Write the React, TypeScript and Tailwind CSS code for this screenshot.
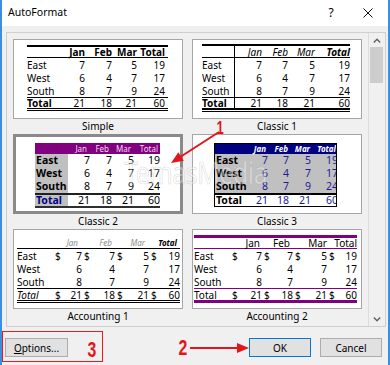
import React from "react";

const HEAD = ["", "Jan", "Feb", "Mar", "Total"];
const DATA = [
  ["East", "7", "7", "5", "19"],
  ["West", "6", "4", "7", "17"],
  ["South", "8", "7", "9", "24"],
];
const TOTAL = ["Total", "21", "18", "21", "60"];

type RowProps = {
  cells: string[];
  widths: string[];
  className?: string;
  cellCls?: string[];
  dollar?: boolean;
};

function Row({ cells, widths, className = "", cellCls = [], dollar = false }: RowProps) {
  return (
    <div className={`flex items-stretch leading-none ${className}`}>
      {cells.map((c, i) => (
        <div
          key={i}
          className={`${widths[i]} shrink-0 flex items-center whitespace-nowrap ${
            i === 0 ? "justify-start" : dollar ? "justify-between pl-[2px]" : "justify-end"
          } ${cellCls[i] ?? ""}`}
        >
          {dollar && i > 0 ? (
            <>
              <span>$</span>
              <span>{c}</span>
            </>
          ) : (
            c
          )}
        </div>
      ))}
    </div>
  );
}

const wS = ["w-[30px]", "w-[28px]", "w-[27px]", "w-[25px]", "w-[28px]"];
function Simple() {
  return (
    <div className="ml-[13px] mt-[5px] w-[141px]">
      <div className="h-[2px] bg-black" />
      <Row cells={HEAD} widths={wS} className="h-[10px] font-bold" />
      <div className="h-px bg-black" />
      {DATA.map((r) => (
        <Row key={r[0]} cells={r} widths={wS} className="h-[13px]" />
      ))}
      <div className="h-px bg-black" />
      <Row cells={TOTAL} widths={wS} className="h-[10px]" cellCls={["font-bold"]} />
      <div className="h-[3px] border-y border-black" />
    </div>
  );
}

const wC1 = ["w-[33px]", "w-[27px]", "w-[26px]", "w-[27px]", "w-[35px]"];
function Classic1() {
  const lab = "border-r border-black";
  return (
    <div className="ml-[9px] mt-[4px] w-[148px]">
      <div className="h-[2px] bg-black" />
      <Row cells={HEAD} widths={wC1} className="h-[11px] italic" cellCls={[lab, "", "", "", "font-bold"]} />
      <div className="h-px bg-black" />
      {DATA.map((r) => (
        <Row key={r[0]} cells={r} widths={wC1} className="h-[13px]" cellCls={[lab]} />
      ))}
      <div className="h-px bg-black" />
      <Row cells={TOTAL} widths={wC1} className="h-[10px]" cellCls={[lab + " font-bold"]} />
      <div className="h-[4px] border-t-2 border-b border-black" />
    </div>
  );
}

const wC2 = ["w-[33px]", "w-[22px]", "w-[22px]", "w-[22px]", "w-[26px]"];
function Classic2() {
  const lab = "bg-[#c0c0c0] font-bold text-[10.5px] pl-px";
  return (
    <div className="ml-[19px] mt-[6px] w-[125px]">
      <Row
        cells={HEAD}
        widths={wC2}
        className="h-[11px] bg-[#800080] text-[8px] text-[#f2dcf2]"
        cellCls={["", "pr-[3px]", "pr-[3px]", "pr-[3px]", "pr-[2px]"]}
      />
      {DATA.map((r) => (
        <Row key={r[0]} cells={r} widths={wC2} className="h-[13px] text-[10.5px]" cellCls={[lab]} />
      ))}
      <div className="h-[2px] bg-[#202020]" />
      <Row cells={TOTAL} widths={wC2} className="h-[11px] text-[10.5px]" cellCls={[lab + " text-[#000080]"]} />
      <div className="h-[2px] bg-[#303030]" />
    </div>
  );
}

const wC3 = ["w-[31px]", "w-[22px]", "w-[21px]", "w-[22px]", "w-[27px]"];
function Classic3() {
  const v = "text-[#1c1c94]";
  return (
    <div className="ml-[21px] mt-[8px] w-[123px] border border-black overflow-hidden">
      <Row
        cells={HEAD}
        widths={wC3}
        className="h-[10px] bg-[#000080] text-[8px] text-white font-bold italic"
        cellCls={["", "pr-[2px]", "pr-[1px]", "pr-[1px]", "pr-[2px]"]}
      />
      {DATA.map((r) => (
        <Row
          key={r[0]}
          cells={r}
          widths={wC3}
          className="h-[13px] bg-[#c0c0c0] text-[10.5px]"
          cellCls={["font-bold pl-px", v, v, v, v]}
        />
      ))}
      <div className="h-[2px] bg-black" />
      <Row
        cells={TOTAL}
        widths={wC3}
        className="h-[11px] bg-white text-[10.5px]"
        cellCls={["font-bold pl-px", v, v, v, v]}
      />
    </div>
  );
}

const wA1 = ["w-[36px]", "w-[29px]", "w-[33px]", "w-[34px]", "w-[31px]"];
function Accounting1() {
  return (
    <div className="ml-[3px] mt-[7px] w-[163px]">
      <Row
        cells={HEAD}
        widths={wA1}
        className="h-[11px] text-[8px] italic text-[#8c8c8c]"
        cellCls={["", "pr-[4px]", "pr-[3px]", "pr-[4px]", "pr-[3px] font-bold text-black"]}
      />
      <div className="h-px bg-black" />
      {DATA.map((r, i) => (
        <Row key={r[0]} cells={r} widths={wA1} className="h-[13px]" dollar={i === 0} />
      ))}
      <div className="h-px bg-black" />
      <Row cells={TOTAL} widths={wA1} className="h-[11px]" cellCls={["italic"]} dollar />
      <div className="h-[3px] border-y border-black" />
    </div>
  );
}

const wA2 = ["w-[36px]", "w-[32px]", "w-[31px]", "w-[34px]", "w-[30px]"];
function Accounting2() {
  return (
    <div className="ml-px mt-[5px] w-[163px]">
      <div className="h-[3px] bg-[#800080]" />
      <Row cells={HEAD} widths={wA2} className="h-[10px]" cellCls={["", "pr-[2px]", "pr-[3px]", "", ""]} />
      <div className="h-px bg-[#800080]" />
      {DATA.map((r, i) => (
        <Row key={r[0]} cells={r} widths={wA2} className="h-[13px]" dollar={i === 0} />
      ))}
      <div className="h-px bg-[#800080]" />
      <Row cells={TOTAL} widths={wA2} className="h-[11px]" dollar />
      <div className="h-[3px] bg-[#800080]" />
    </div>
  );
}

function Preview({ label, sel, children }: { label: string; sel?: boolean; children: React.ReactNode }) {
  return (
    <div>
      <div
        className={`h-[80px] bg-white overflow-hidden text-[10px] text-black ${
          sel ? "border-[3px] border-[#8a8a8a]" : "border border-[#a6a6a6]"
        }`}
      >
        {children}
      </div>
      <div className="h-[15px] flex items-center justify-center text-[10px] text-black">{label}</div>
    </div>
  );
}

function Chevron({ down }: { down?: boolean }) {
  return (
    <svg width="8" height="5" viewBox="0 0 8 5" className={down ? "rotate-180" : ""}>
      <path d="M0.8 4.4 L4 1.2 L7.2 4.4" fill="none" stroke="#606060" strokeWidth="1.4" />
    </svg>
  );
}

export default function App() {
  return (
    <div className="relative w-[390px] h-[365px] overflow-hidden font-['Noto_Sans',sans-serif]">
      <div className="w-[390px] h-[365px] bg-[#f0f0f0] border-x-2 border-[#3b8fe0] flex flex-col">
        {/* title bar */}
        <div className="h-[26px] bg-white flex items-center pl-[6px] shrink-0">
          <span className="text-[10.5px] text-black">AutoFormat</span>
          <span className="ml-auto text-[12px] text-black w-[10px] text-center">?</span>
          <svg width="10" height="10" viewBox="0 0 10 10" className="ml-[27px] mr-[15px]">
            <path d="M0.5 0.5 L9.5 9.5 M9.5 0.5 L0.5 9.5" stroke="#111" strokeWidth="1" />
          </svg>
        </div>

        {/* list box */}
        <div className="mt-[6px] ml-[4px] w-[380px] h-[295px] border border-[#cfcfcf] flex shrink-0">
          <div className="w-[361px] pl-[6px] pt-[6px] overflow-hidden">
            <div className="grid grid-cols-[170px_170px] gap-x-[9px]">
              <Preview label="Simple">
                <Simple />
              </Preview>
              <Preview label="Classic 1">
                <Classic1 />
              </Preview>
              <Preview label="Classic 2" sel>
                <Classic2 />
              </Preview>
              <Preview label="Classic 3">
                <Classic3 />
              </Preview>
              <Preview label="Accounting 1">
                <Accounting1 />
              </Preview>
              <Preview label="Accounting 2">
                <Accounting2 />
              </Preview>
            </div>
          </div>
          <div className="w-[17px] border-l border-[#dcdcdc] flex flex-col">
            <div className="h-[14px] flex items-center justify-center">
              <Chevron />
            </div>
            <div className="ml-px w-[13px] h-[36px] bg-[#cdcdcd]" />
            <div className="flex-1" />
            <div className="h-[14px] flex items-center justify-center">
              <Chevron down />
            </div>
          </div>
        </div>

        {/* buttons */}
        <div className="flex mt-[4px] text-[10px] text-black">
          <div className="w-[101px] h-[31px] border border-[#f01818] flex items-start pt-[6px] pl-[2px]">
            <button className="w-[63px] h-[19px] bg-[#e1e1e1] border border-[#adadad] leading-none">
              <span className="underline">O</span>ptions...
            </button>
            <span className="ml-[19px] w-[10px] flex justify-center text-[22px] font-bold text-[#e4141b] leading-none font-['Liberation_Sans',sans-serif] scale-x-[0.72] mt-[1px]">
              3
            </span>
          </div>
          <div className="ml-auto mr-[6px] mt-[7px] flex items-center h-[19px]">
            <span className="w-[10px] flex justify-center text-[22px] font-bold text-[#e4141b] leading-none font-['Liberation_Sans',sans-serif] scale-x-[0.72]">
              2
            </span>
            <svg width="60" height="12" viewBox="0 0 60 12" className="ml-px">
              <path d="M1 6 H50" stroke="#e4141b" strokeWidth="2" />
              <path d="M48 1 L60 6 L48 11 Z" fill="#e4141b" />
            </svg>
            <button className="w-[62px] h-[19px] bg-[#e1e1e1] border border-[#0078d7] leading-none">OK</button>
            <button className="ml-[9px] w-[62px] h-[19px] bg-[#e1e1e1] border border-[#adadad] leading-none">
              Cancel
            </button>
          </div>
        </div>
      </div>

      {/* watermark */}
      <div className="absolute left-[124px] top-[160px] text-[25px] leading-none tracking-[-0.5px] text-white/40 [-webkit-text-stroke:0.6px_rgba(150,150,150,0.35)] scale-y-[1.2] pointer-events-none">
        TemasMedia
      </div>

      {/* annotation 1 */}
      <svg width="390" height="365" viewBox="0 0 390 365" className="absolute left-0 top-0 pointer-events-none">
        <path d="M219 132 L181 156.5" stroke="#e4141b" strokeWidth="2" />
        <path d="M171 163 L183.8 160.7 L178.4 152.3 Z" fill="#e4141b" />
      </svg>
      <span className="absolute left-[215px] top-[119px] w-[10px] flex justify-center text-[18px] font-bold text-[#e4141b] leading-none font-['Liberation_Sans',sans-serif] scale-x-[0.72]">
        1
      </span>
    </div>
  );
}
